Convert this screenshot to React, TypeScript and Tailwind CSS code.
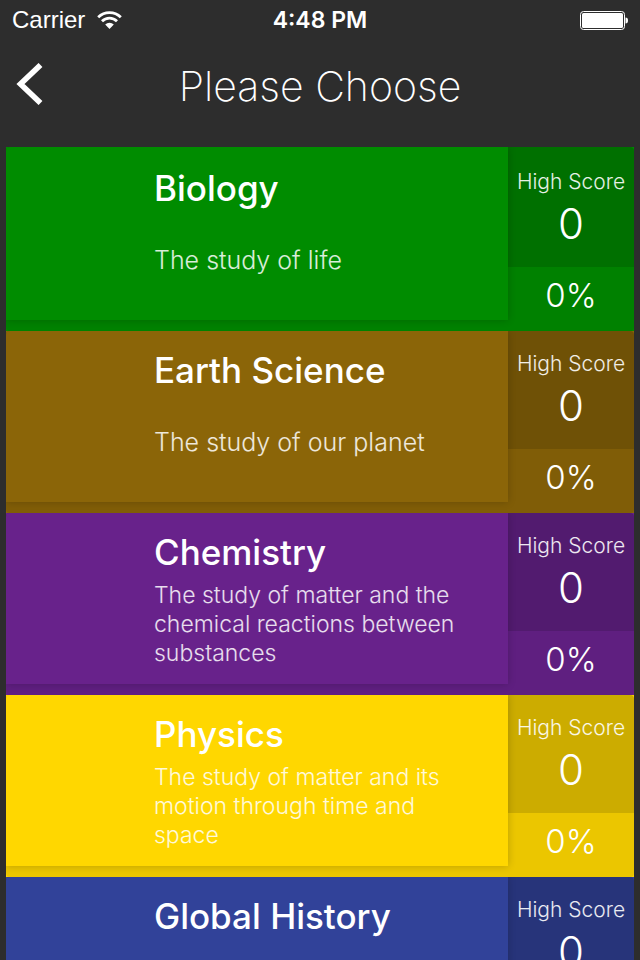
import clsx from "clsx";

interface Category {
  name: string;
  description?: string;
  color: string;
  long?: boolean;
}

const categories: Category[] = [
  { name: "Biology", description: "The study of life", color: "bg-[#008c00]" },
  { name: "Earth Science", description: "The study of our planet", color: "bg-[#8b6508]" },
  {
    name: "Chemistry",
    description: "The study of matter and the chemical reactions between substances",
    color: "bg-[#68228b]",
    long: true,
  },
  {
    name: "Physics",
    description: "The study of matter and its motion through time and space",
    color: "bg-[#ffd700]",
    long: true,
  },
  { name: "Global History", color: "bg-[#314299]" },
];

function StatusBar() {
  return (
    <div className="grid h-10 grid-cols-[1fr_auto_1fr] items-center px-3">
      <div className="flex items-center gap-3">
        <span className="font-['Liberation_Sans',sans-serif] text-2xl">Carrier</span>
        <svg className="h-[18px] w-[25px]" viewBox="0 0 25 18" aria-label="Wi-Fi">
          <g fill="none" stroke="white" strokeWidth="2.8">
            <path d="M1.2 6.2a16 16 0 0 1 22.6 0" />
            <path d="M5 10.2a10.6 10.6 0 0 1 15 0" />
          </g>
          <path d="M12.5 18 8.2 13.6a6.1 6.1 0 0 1 8.6 0z" fill="white" />
        </svg>
      </div>
      <span className="text-center text-[23px] font-semibold">4:48 PM</span>
      <svg className="h-5 w-12 justify-self-end" viewBox="0 0 48 20" aria-label="Battery">
        <rect x="0.5" y="1.5" width="44" height="18" rx="3" fill="none" stroke="white" />
        <rect x="2" y="3" width="41" height="15" rx="1.5" fill="white" />
        <path d="M45.5 7.5c1.8 0 2.5 1.2 2.5 3s-.7 3-2.5 3z" fill="white" />
      </svg>
    </div>
  );
}

function CategoryRow({ name, description, color, long }: Category) {
  return (
    <li className={clsx("group shrink-0", color)}>
      <button type="button" className="flex w-full overflow-hidden rounded bg-black/8 text-left">
        <span
          className={clsx(
            "z-10 mb-[11px] flex h-[171px] min-w-0 flex-1 flex-col pt-[15px] pr-10 pl-[148px] shadow-[0_0_8px_rgba(0,0,0,0.2)] group-first:h-[173px] group-first:pt-[17px]",
            color,
          )}
        >
          <span className="text-[35px] leading-12 font-medium">{name}</span>
          <span
            className={clsx(
              "flex h-24 items-center font-light text-white/85",
              long ? "text-[23px] leading-[29px]" : "text-[25px] leading-8",
            )}
          >
            {description}
          </span>
        </span>
        <span className="flex w-[126px] flex-col self-stretch text-center font-light">
          <span className="flex h-[118px] flex-col bg-black/13 pt-[19px] group-first:h-[120px] group-first:pt-[21px]">
            <span className="text-[21px] leading-7 text-white/90">High Score</span>
            <span className="text-[42px] leading-14">0</span>
          </span>
          <span className="flex flex-1 items-center justify-center pb-1.5 text-[33px]">0%</span>
        </span>
      </button>
    </li>
  );
}

export default function App() {
  return (
    <div className="flex h-screen flex-col overflow-hidden bg-[#2d2d2d] font-['Inter',sans-serif] text-white">
      <StatusBar />
      <header className="grid h-[107px] grid-cols-[80px_1fr_80px] items-start pt-4">
        <button type="button" aria-label="Back" className="flex h-14 items-center pl-4">
          <svg className="h-[42px] w-7" viewBox="0 0 28 42" fill="none" stroke="white" strokeWidth="5.6">
            <path d="M24.5 2 4.5 21 24.5 40" />
          </svg>
        </button>
        <h1 className="text-center text-[41px] leading-15 font-extralight">Please Choose</h1>
      </header>
      <ul className="flex min-h-0 flex-1 flex-col overflow-y-auto px-1.5 [scrollbar-width:none]">
        {categories.map((category) => (
          <CategoryRow key={category.name} {...category} />
        ))}
      </ul>
    </div>
  );
}
